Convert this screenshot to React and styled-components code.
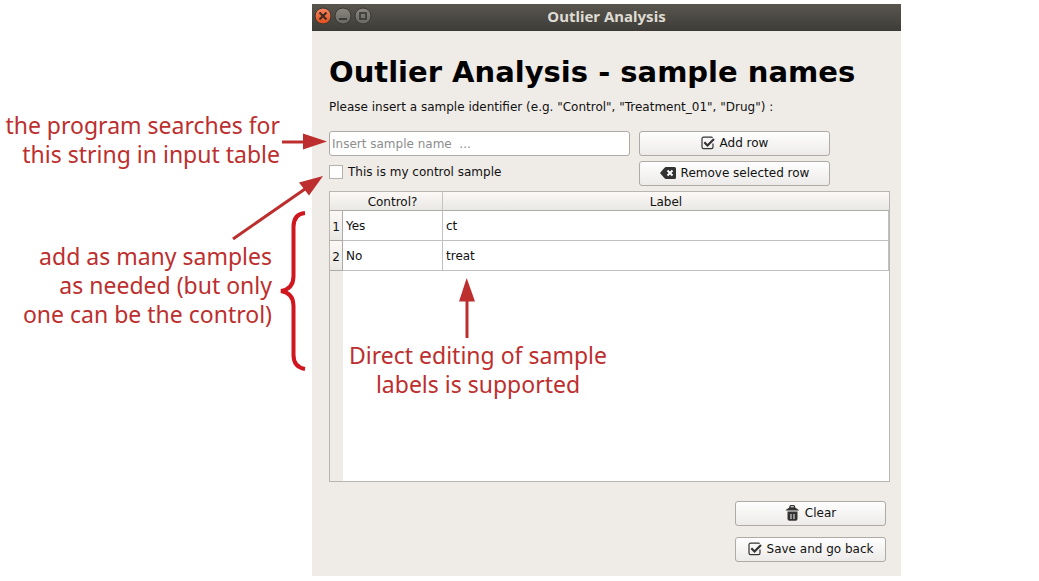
import React from "react";
import styled, { createGlobalStyle } from "styled-components";

const GlobalStyle = createGlobalStyle`
  *, *::before, *::after { box-sizing: border-box; }
  body {
    margin: 0;
    background: #fff;
    color: #111;
    font: 12px/16px "DejaVu Sans", sans-serif;
  }
  input, button { font: inherit; color: inherit; }
`;

const Page = styled.div`
  position: relative;
  display: grid;
  grid-template-columns: 312px minmax(0, 1fr) 138px;
  min-height: 100vh;
  padding: 4px 0 5px;
`;

const Window = styled.main`
  grid-column: 2;
  display: flex;
  flex-direction: column;
  background: #efebe7;
`;

const TitleBar = styled.header`
  display: grid;
  grid-template-columns: 64px 1fr 64px;
  align-items: center;
  height: 27px;
  padding-bottom: 2px;
  background: linear-gradient(#59564e, #3e3d39);
  border-bottom: 1px solid #3b3a36;
`;

const WindowControls = styled.div`
  display: flex;
  gap: 2px;
  padding-left: 2px;
`;

const ControlButton = styled.button`
  display: block;
  width: 18px;
  height: 18px;
  padding: 0;
  border: 0;
  background: none;
  svg { display: block; }
`;

const TitleText = styled.div`
  color: #dfdbd2;
  font: bold 15px/18px "Noto Sans", sans-serif;
  text-align: center;
`;

const Content = styled.div`
  flex: 1;
  display: flex;
  flex-direction: column;
  padding: 23px 11px 14px 17px;
`;

const Heading = styled.h1`
  margin: 0;
  color: #000;
  font-size: 29px;
  line-height: 36px;
  white-space: nowrap;
`;

const Hint = styled.label`
  margin: 9px 0 16px;
`;

const EntryForm = styled.form`
  display: grid;
  grid-template-columns: minmax(0, 1fr) 191px;
  gap: 5px 9px;
  padding-right: 60px;
  margin-bottom: 5px;
`;

const NameInput = styled.input`
  width: 100%;
  height: 25px;
  padding: 0 2px;
  border: 1px solid #aeaaa6;
  border-radius: 3px;
  background: #fff;
  &::placeholder { color: #8d8d8d; opacity: 1; }
`;

const CheckLabel = styled.label`
  display: flex;
  align-items: center;
  gap: 5px;
  height: 22px;
`;

const CheckBox = styled.input`
  appearance: none;
  width: 14px;
  height: 14px;
  margin: 0;
  border: 1px solid #b5b1ad;
  background: #fff;
`;

const PushButton = styled.button`
  display: flex;
  align-items: center;
  justify-content: center;
  gap: 5px;
  height: 25px;
  padding: 0 0 1px;
  border: 1px solid #aeaaa6;
  border-radius: 3px;
  background: linear-gradient(#fefefe, #edebe9);
`;

const TableFrame = styled.div`
  flex: 1;
  min-height: 120px;
  border: 1px solid #b8b5b2;
  background: linear-gradient(to right, #efebe7 13px, #fff 13px);
`;

const SampleTable = styled.table`
  width: 100%;
  table-layout: fixed;
  border-collapse: separate;
  border-spacing: 0;
`;

const HeadCell = styled.th`
  width: ${(p) => p.$width || "auto"};
  height: 19px;
  padding: 1px 0 0;
  border-bottom: 1px solid #aeaaa6;
  border-right: ${(p) => (p.$divided ? "1px solid #c6c3c0" : "0")};
  background: linear-gradient(#fbf8f5, #eae8e4);
  font-weight: normal;
`;

const RowHeader = styled.th`
  height: 30px;
  padding: 2px 0 0;
  border: solid #aeaaa6;
  border-width: 0 1px 1px 0;
  background: linear-gradient(#fbf8f5, #eae8e4);
  font-weight: normal;
`;

const Cell = styled.td`
  height: 30px;
  padding: 0 3px;
  border: solid #c2c0be;
  border-width: 0 1px 1px 0;
  background: #fff;
`;

const Footer = styled.footer`
  display: flex;
  flex-direction: column;
  align-items: stretch;
  align-self: flex-end;
  gap: 11px;
  width: 151px;
  margin: 19px 4px 0 0;
`;

const Overlay = styled.svg`
  position: absolute;
  top: 0;
  left: 0;
  pointer-events: none;
`;

const Note = styled.p`
  position: absolute;
  left: ${(p) => p.$left}px;
  top: ${(p) => p.$top}px;
  width: ${(p) => p.$width}px;
  margin: 0;
  color: #bc2f2e;
  font: 23px/29px "Noto Sans", sans-serif;
  text-align: ${(p) => p.$align};
  white-space: nowrap;
  pointer-events: none;
`;

const NoteLine = styled.span`
  display: block;
`;

function CheckIcon() {
  return (
    <svg width="14" height="14" viewBox="0 0 14 14" fill="none" aria-hidden="true">
      <path d="M12 7.500v3.500a1.600 1.600 0 0 1-1.600 1.600H2.600A1.600 1.600 0 0 1 1 11V2.800A1.600 1.600 0 0 1 2.600 1.200H10.600a1.400 1.400 0 0 1 1 .4" stroke="#333" strokeWidth="1.200" />
      <path d="M3.300 6.300l3.200 3.200L13 3" stroke="#333" strokeWidth="2.200" />
    </svg>
  );
}

function BackspaceIcon() {
  return (
    <svg width="16" height="14" viewBox="0 0 16 14" aria-hidden="true">
      <path d="M0 7l4.300-5Q5 1 6.200 1H14.500Q16 1 16 2.500v9Q16 13 14.500 13H6.200Q5 13 4.300 12z" fill="#333" />
      <path d="M7.500 4.500l5 5M12.500 4.500l-5 5" stroke="#fff" strokeWidth="1.900" />
    </svg>
  );
}

function TrashIcon() {
  return (
    <svg width="15" height="16" viewBox="0 0 15 16" aria-hidden="true">
      <path d="M5 3V1.800Q5 .7 6 .7h2.500q1 0 1 1.100V3" fill="none" stroke="#333" strokeWidth="1.300" />
      <path d="M.5 5.500Q1 4.300 3 3.500Q4.200 2.300 5.500 2.300h3.500q1.300 0 2.500 1.200q2 .8 2.500 2z" fill="#333" />
      <path d="M2.500 6.500h10v7.300q0 2-2 2h-6q-2 0-2-2z" fill="#333" />
      <path d="M6 9v5M9 9v5" stroke="#f5f4f3" strokeWidth="1" />
    </svg>
  );
}

function ControlIcon({ kind }) {
  const close = kind === "close";
  return (
    <svg width="18" height="18" viewBox="0 0 18 18" fill="none" aria-hidden="true">
      <defs>
        <linearGradient id={"face-" + kind} x1="0" y1="0" x2="0" y2="1">
          <stop offset="0" stopColor={close ? "#f68662" : "#8a8881"} />
          <stop offset="1" stopColor={close ? "#df4d1c" : "#686660"} />
        </linearGradient>
      </defs>
      <circle cx="9" cy="9" r="8" fill={`url(#face-${kind})`} stroke="#393833" />
      {close && <path d="M5.500 5.500l7 7M12.500 5.500l-7 7" stroke="#3c2b20" strokeWidth="2" />}
      {kind === "minimise" && <path d="M5 12h8" stroke="#3c3b37" strokeWidth="2" />}
      {kind === "maximise" && <rect x="6" y="6" width="6" height="6" stroke="#3c3b37" strokeWidth="1.700" />}
    </svg>
  );
}

const samples = [
  { control: "Yes", label: "ct" },
  { control: "No", label: "treat" },
];

export default function App() {
  return (
    <Page>
      <GlobalStyle />
      <Window>
        <TitleBar>
          <WindowControls>
            <ControlButton aria-label="Close"><ControlIcon kind="close" /></ControlButton>
            <ControlButton aria-label="Minimise"><ControlIcon kind="minimise" /></ControlButton>
            <ControlButton aria-label="Maximise"><ControlIcon kind="maximise" /></ControlButton>
          </WindowControls>
          <TitleText>Outlier Analysis</TitleText>
        </TitleBar>
        <Content>
          <Heading>Outlier Analysis - sample names</Heading>
          <Hint htmlFor="sample-name">
            Please insert a sample identifier (e.g. "Control", "Treatment_01", "Drug") :
          </Hint>
          <EntryForm onSubmit={(e) => e.preventDefault()}>
            <NameInput id="sample-name" type="text" placeholder={"Insert sample name \u00a0..."} />
            <PushButton type="submit"><CheckIcon />Add row</PushButton>
            <CheckLabel htmlFor="is-control">
              <CheckBox id="is-control" type="checkbox" />
              This is my control sample
            </CheckLabel>
            <PushButton type="button"><BackspaceIcon />Remove selected row</PushButton>
          </EntryForm>
          <TableFrame>
            <SampleTable>
              <thead>
                <tr>
                  <HeadCell $width="13px" />
                  <HeadCell $width="100px" $divided scope="col">Control?</HeadCell>
                  <HeadCell scope="col">Label</HeadCell>
                </tr>
              </thead>
              <tbody>
                {samples.map((s, i) => (
                  <tr key={s.label}>
                    <RowHeader scope="row">{i + 1}</RowHeader>
                    <Cell>{s.control}</Cell>
                    <Cell>{s.label}</Cell>
                  </tr>
                ))}
              </tbody>
            </SampleTable>
          </TableFrame>
          <Footer>
            <PushButton type="button"><TrashIcon />Clear</PushButton>
            <PushButton type="button"><CheckIcon />Save and go back</PushButton>
          </Footer>
        </Content>
      </Window>

      <Overlay width="480" height="380" viewBox="0 0 480 380" fill="none" aria-hidden="true">
        <g stroke="#bc2f2e" strokeWidth="3">
          <path d="M282 142H305" />
          <path d="M233 239L305 189" />
          <path d="M467 338V299" />
        </g>
        <g fill="#bc2f2e">
          <path d="M327 141.500L303 133.500V149.500z" />
          <path d="M323 176L299 182.500L309 195.500z" />
          <path d="M466.700 278L459 301.500H475z" />
        </g>
        <path
          d="M305 213Q293.500 214 293.500 227V276Q293.500 289 281 291Q293.500 293 293.500 306V355Q293.500 367 305 369"
          stroke="#d0161f"
          strokeWidth="4"
        />
      </Overlay>
      <Note $left={0} $top={111} $width={280} $align="right">
        <NoteLine>the program searches for</NoteLine>
        <NoteLine>this string in input table</NoteLine>
      </Note>
      <Note $left={0} $top={242} $width={272} $align="right">
        <NoteLine>add as many samples</NoteLine>
        <NoteLine>as needed (but only</NoteLine>
        <NoteLine>one can be the control)</NoteLine>
      </Note>
      <Note $left={343} $top={341} $width={270} $align="center">
        <NoteLine>Direct editing of sample</NoteLine>
        <NoteLine>labels is supported</NoteLine>
      </Note>
    </Page>
  );
}
